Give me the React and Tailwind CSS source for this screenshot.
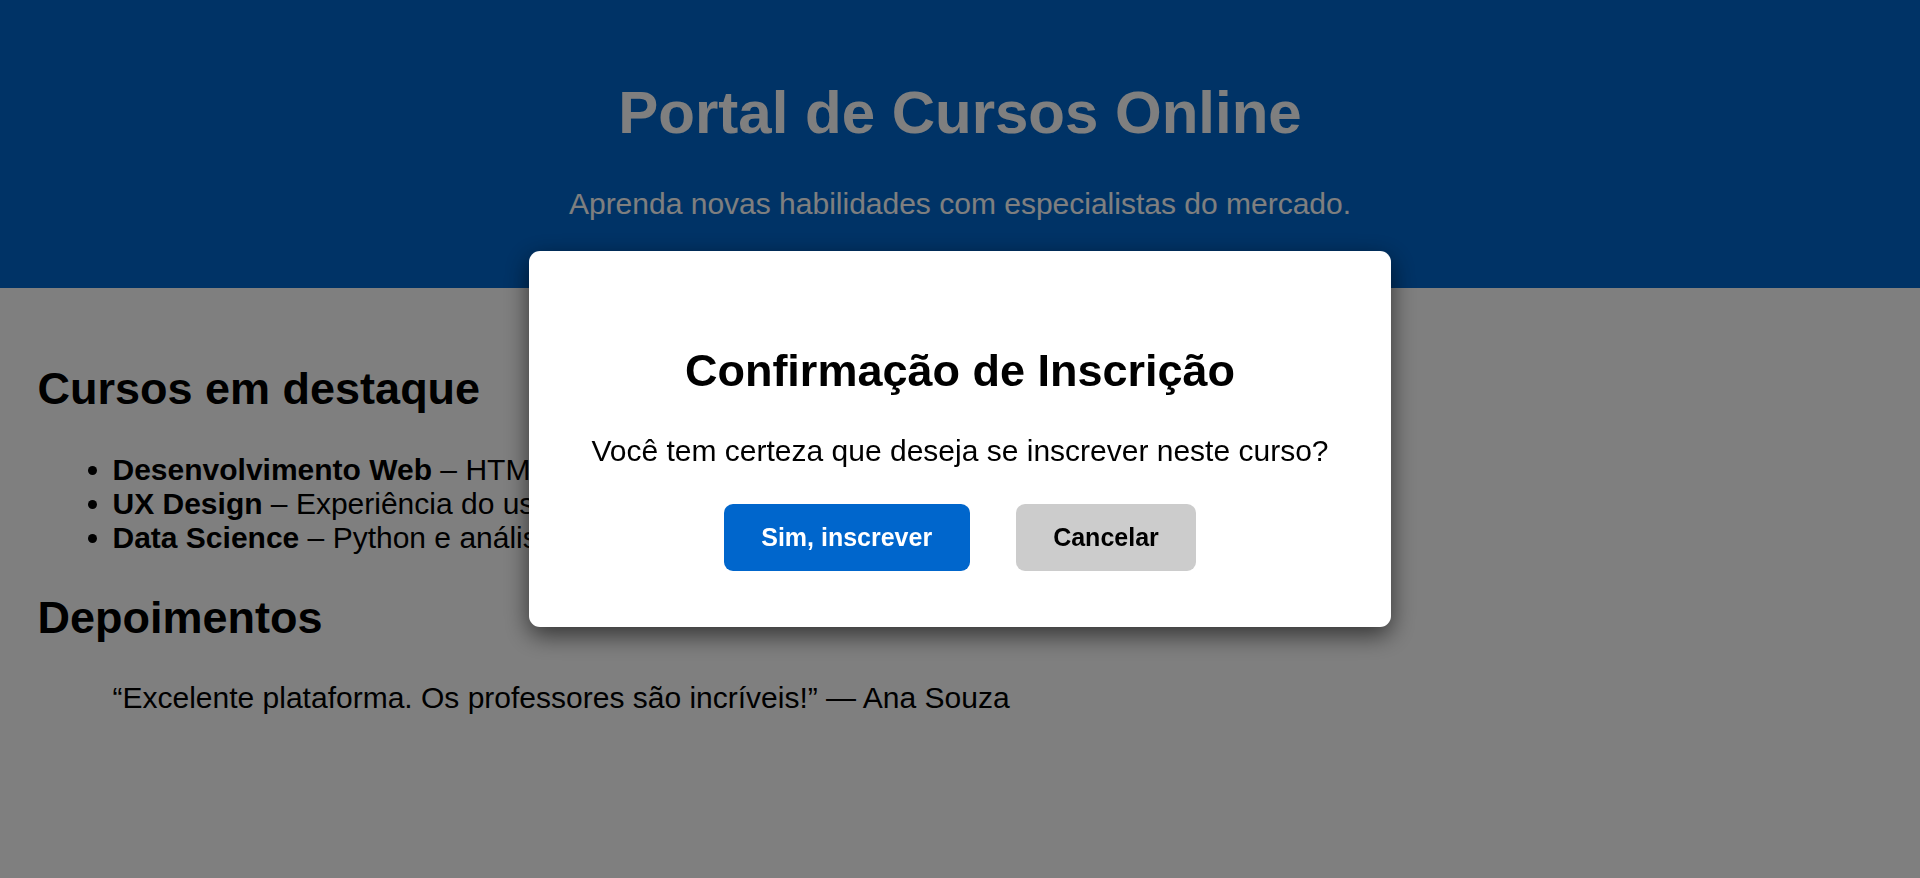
import React from 'react';

const cursos = [
    { nome: 'Desenvolvimento Web', desc: 'HTML, CSS e JavaScript' },
    { nome: 'UX Design', desc: 'Experiência do usuário e prototipação' },
    { nome: 'Data Science', desc: 'Python e análise de dados' },
];

export default function App() {
    return (
        <div className="min-h-screen bg-white text-black leading-[normal] font-['Liberation_Sans',Arial,sans-serif]">
            {/* Header */}
            <header className="bg-[#0066cc] text-white text-center py-[37.5px]">
                <h1 className="text-[60px] font-bold my-[40.2px]">Portal de Cursos Online</h1>
                <p className="text-[30px] mb-[30px]">Aprenda novas habilidades com especialistas do mercado.</p>
            </header>

            {/* Conteúdo */}
            <main className="p-[37.5px] text-[30px]">
                <h2 className="text-[45px] font-bold my-[37.35px]">Cursos em destaque</h2>
                <ul className="list-disc pl-[75px] my-[30px]">
                    {cursos.map((c) => (
                        <li key={c.nome}>
                            <strong>{c.nome}</strong> – {c.desc}
                        </li>
                    ))}
                </ul>

                <h2 className="text-[45px] font-bold my-[37.35px]">Depoimentos</h2>
                <blockquote className="mx-[75px] my-[30px]">
                    “Excelente plataforma. Os professores são incríveis!” — Ana Souza
                </blockquote>
            </main>

            {/* Modal */}
            <div className="fixed inset-0 bg-black/50 flex items-center justify-center">
                <div className="w-[862px] bg-white rounded-[11px] p-[56.25px] text-center shadow-[0_8px_25px_rgba(0,0,0,0.6)]">
                    <h2 className="text-[45px] font-bold mt-[37.35px] mb-[37.35px]">Confirmação de Inscrição</h2>
                    <p className="text-[30px]">Você tem certeza que deseja se inscrever neste curso?</p>
                    <div className="flex justify-center gap-[46px] mt-[36px]">
                        <button className="bg-[#0066cc] text-white text-[25px] font-bold px-[37.5px] py-[18.75px] rounded-[9px] cursor-pointer">
                            Sim, inscrever
                        </button>
                        <button className="bg-[#cccccc] text-black text-[25px] font-bold px-[37.5px] py-[18.75px] rounded-[9px] cursor-pointer">
                            Cancelar
                        </button>
                    </div>
                </div>
            </div>
        </div>
    );
}
